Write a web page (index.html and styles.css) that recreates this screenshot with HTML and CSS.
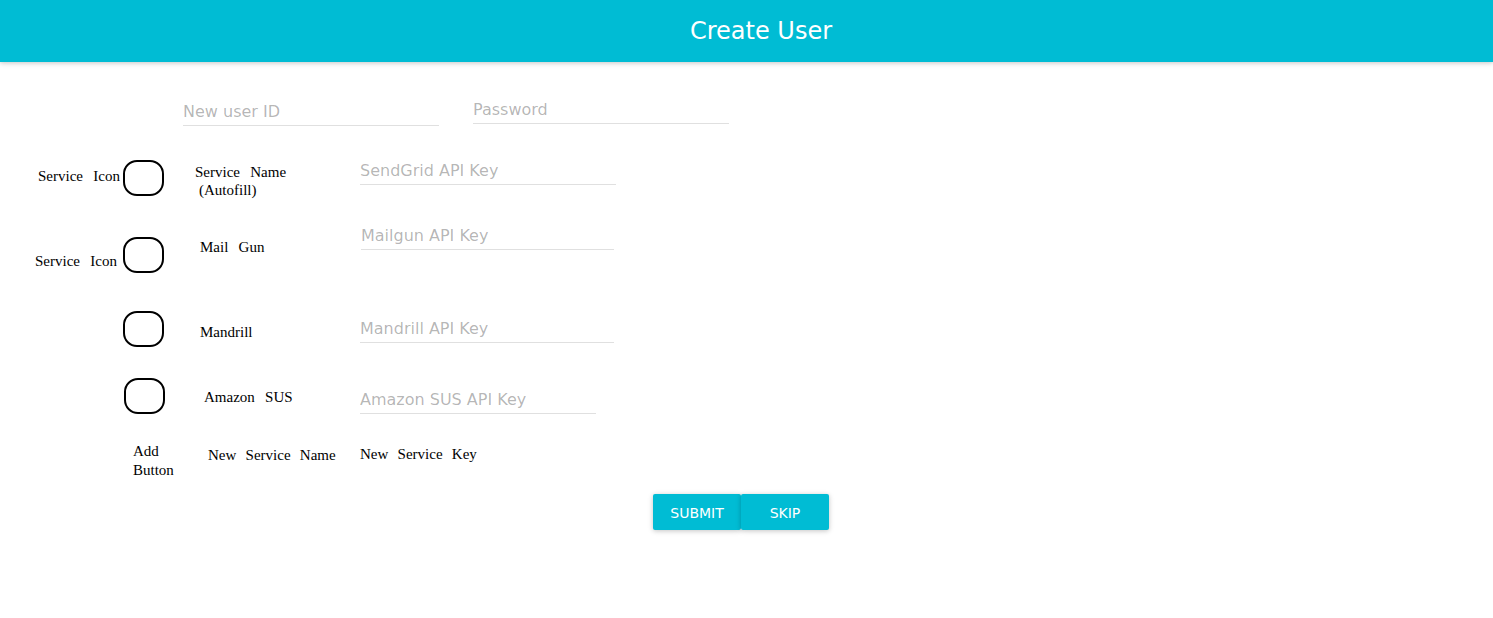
FILE: index.html
```html
<!DOCTYPE html>
<html lang="en">
<head>
<meta charset="utf-8">
<title>Create User</title>
<link rel="stylesheet" href="styles.css">
</head>
<body>
<header class="appbar">
  <h1 class="appbar-title">Create User</h1>
</header>
<main class="form">
  <div class="creds">
    <input class="field field-userid" type="text" placeholder="New user ID">
    <input class="field field-password" type="password" placeholder="Password">
  </div>
  <div class="services">
    <div class="svc svc-1">
      <span class="svc-label">Service Icon</span>
      <span class="svc-icon"></span>
      <span class="svc-name"><span class="line">Service Name</span><span class="line indent">(Autofill)</span></span>
      <input class="field key" type="text" placeholder="SendGrid API Key">
    </div>
    <div class="svc svc-2">
      <span class="svc-label">Service Icon</span>
      <span class="svc-icon"></span>
      <span class="svc-name">Mail Gun</span>
      <input class="field key" type="text" placeholder="Mailgun API Key">
    </div>
    <div class="svc svc-3">
      <span class="svc-label"></span>
      <span class="svc-icon"></span>
      <span class="svc-name">Mandrill</span>
      <input class="field key" type="text" placeholder="Mandrill API Key">
    </div>
    <div class="svc svc-4">
      <span class="svc-label"></span>
      <span class="svc-icon"></span>
      <span class="svc-name">Amazon SUS</span>
      <input class="field key" type="text" placeholder="Amazon SUS API Key">
    </div>
    <div class="svc svc-5">
      <span class="svc-add"><span class="line">Add</span><span class="line">Button</span></span>
      <span class="svc-name">New Service Name</span>
      <span class="svc-newkey">New Service Key</span>
    </div>
  </div>
  <div class="actions">
    <button class="btn" type="button">Submit</button>
    <button class="btn" type="button">Skip</button>
  </div>
</main>
</body>
</html>
```

FILE: styles.css
```css
html, body {
  margin: 0;
  padding: 0;
  background: #ffffff;
}

body {
  font-family: "DejaVu Sans", Verdana, sans-serif;
  width: 1493px;
  height: 618px;
  overflow: hidden;
}

.appbar {
  height: 62px;
  box-sizing: border-box;
  background: #00bcd4;
  padding: 17px 0 0 29px;
  box-shadow: 0 1px 6px rgba(0, 0, 0, 0.12), 0 1px 4px rgba(0, 0, 0, 0.12);
  position: relative;
  z-index: 1;
}

.appbar-title {
  margin: 0;
  font-family: "DejaVu Sans", sans-serif;
  font-weight: normal;
  font-size: 24px;
  line-height: 28px;
  color: #ffffff;
  text-align: center;
}

.form {
  padding-top: 36px;
}

.creds {
  display: flex;
  align-items: flex-start;
  gap: 34px;
  padding-left: 183px;
}

.field {
  display: block;
  box-sizing: border-box;
  height: 26px;
  padding: 0 0 3px 0;
  margin: 0;
  border: none;
  border-bottom: 1px solid #e0e0e0;
  background: transparent;
  outline: none;
  font-family: "DejaVu Sans", sans-serif;
  font-size: 16px;
  color: rgba(0, 0, 0, 0.87);
}

.field::placeholder {
  color: rgba(0, 0, 0, 0.3);
}

.field-userid {
  width: 256px;
  margin-top: 2px;
}

.field-password {
  width: 256px;
}

.services {
  margin-top: 33px;
}

.svc {
  display: grid;
  grid-template-columns: 123px 41px 196px 256px;
  align-items: start;
  font-family: "Liberation Serif", "Times New Roman", serif;
  font-size: 15px;
  line-height: 18px;
  color: #000000;
  word-spacing: 6.5px;
}

.line {
  display: block;
}

.indent {
  padding-left: 4px;
}

.svc-icon {
  display: block;
  box-sizing: border-box;
  width: 41px;
  height: 36px;
  border: 2px solid #000000;
  border-radius: 14px;
}

.svc-label {
  white-space: nowrap;
}

.svc-1 { height: 65px; }
.svc-1 .svc-label { margin-top: 8px; padding-left: 38px; }
.svc-1 .svc-icon { margin-top: 1px; }
.svc-1 .svc-name { margin-top: 4px; padding-left: 31px; }
.svc-1 .key { width: 256px; }

.svc-2 { height: 87px; }
.svc-2 .svc-label { margin-top: 28px; padding-left: 35px; }
.svc-2 .svc-icon { margin-top: 13px; }
.svc-2 .svc-name { margin-top: 14px; padding-left: 36px; }
.svc-2 .key { width: 253px; margin-left: 1px; }

.svc-3 { height: 67px; }
.svc-3 .svc-name { margin-top: 12px; padding-left: 36px; }
.svc-3 .key { width: 254px; margin-top: 6px; }

.svc-4 { height: 64px; }
.svc-4 .svc-icon { margin-left: 1px; }
.svc-4 .svc-name { margin-top: 10px; padding-left: 40px; }
.svc-4 .key { width: 236px; margin-top: 10px; }

.svc-5 { height: 52px; }
.svc-5 .svc-add { grid-column: 1 / 3; padding-left: 133px; line-height: 19px; }
.svc-5 .svc-name { margin-top: 4px; padding-left: 44px; white-space: nowrap; word-spacing: 5.5px; }
.svc-5 .svc-newkey { margin-top: 3px; white-space: nowrap; word-spacing: 5.5px; }

.actions {
  display: flex;
  padding-left: 653px;
}

.btn {
  width: 88px;
  height: 36px;
  margin: 0;
  padding: 2px 0 0;
  border: none;
  border-radius: 2px;
  background: #00bcd4;
  color: #ffffff;
  font-family: "DejaVu Sans", sans-serif;
  font-size: 14px;
  text-transform: uppercase;
  box-shadow: 0 1px 6px rgba(0, 0, 0, 0.12), 0 1px 4px rgba(0, 0, 0, 0.12);
  cursor: pointer;
}
```
